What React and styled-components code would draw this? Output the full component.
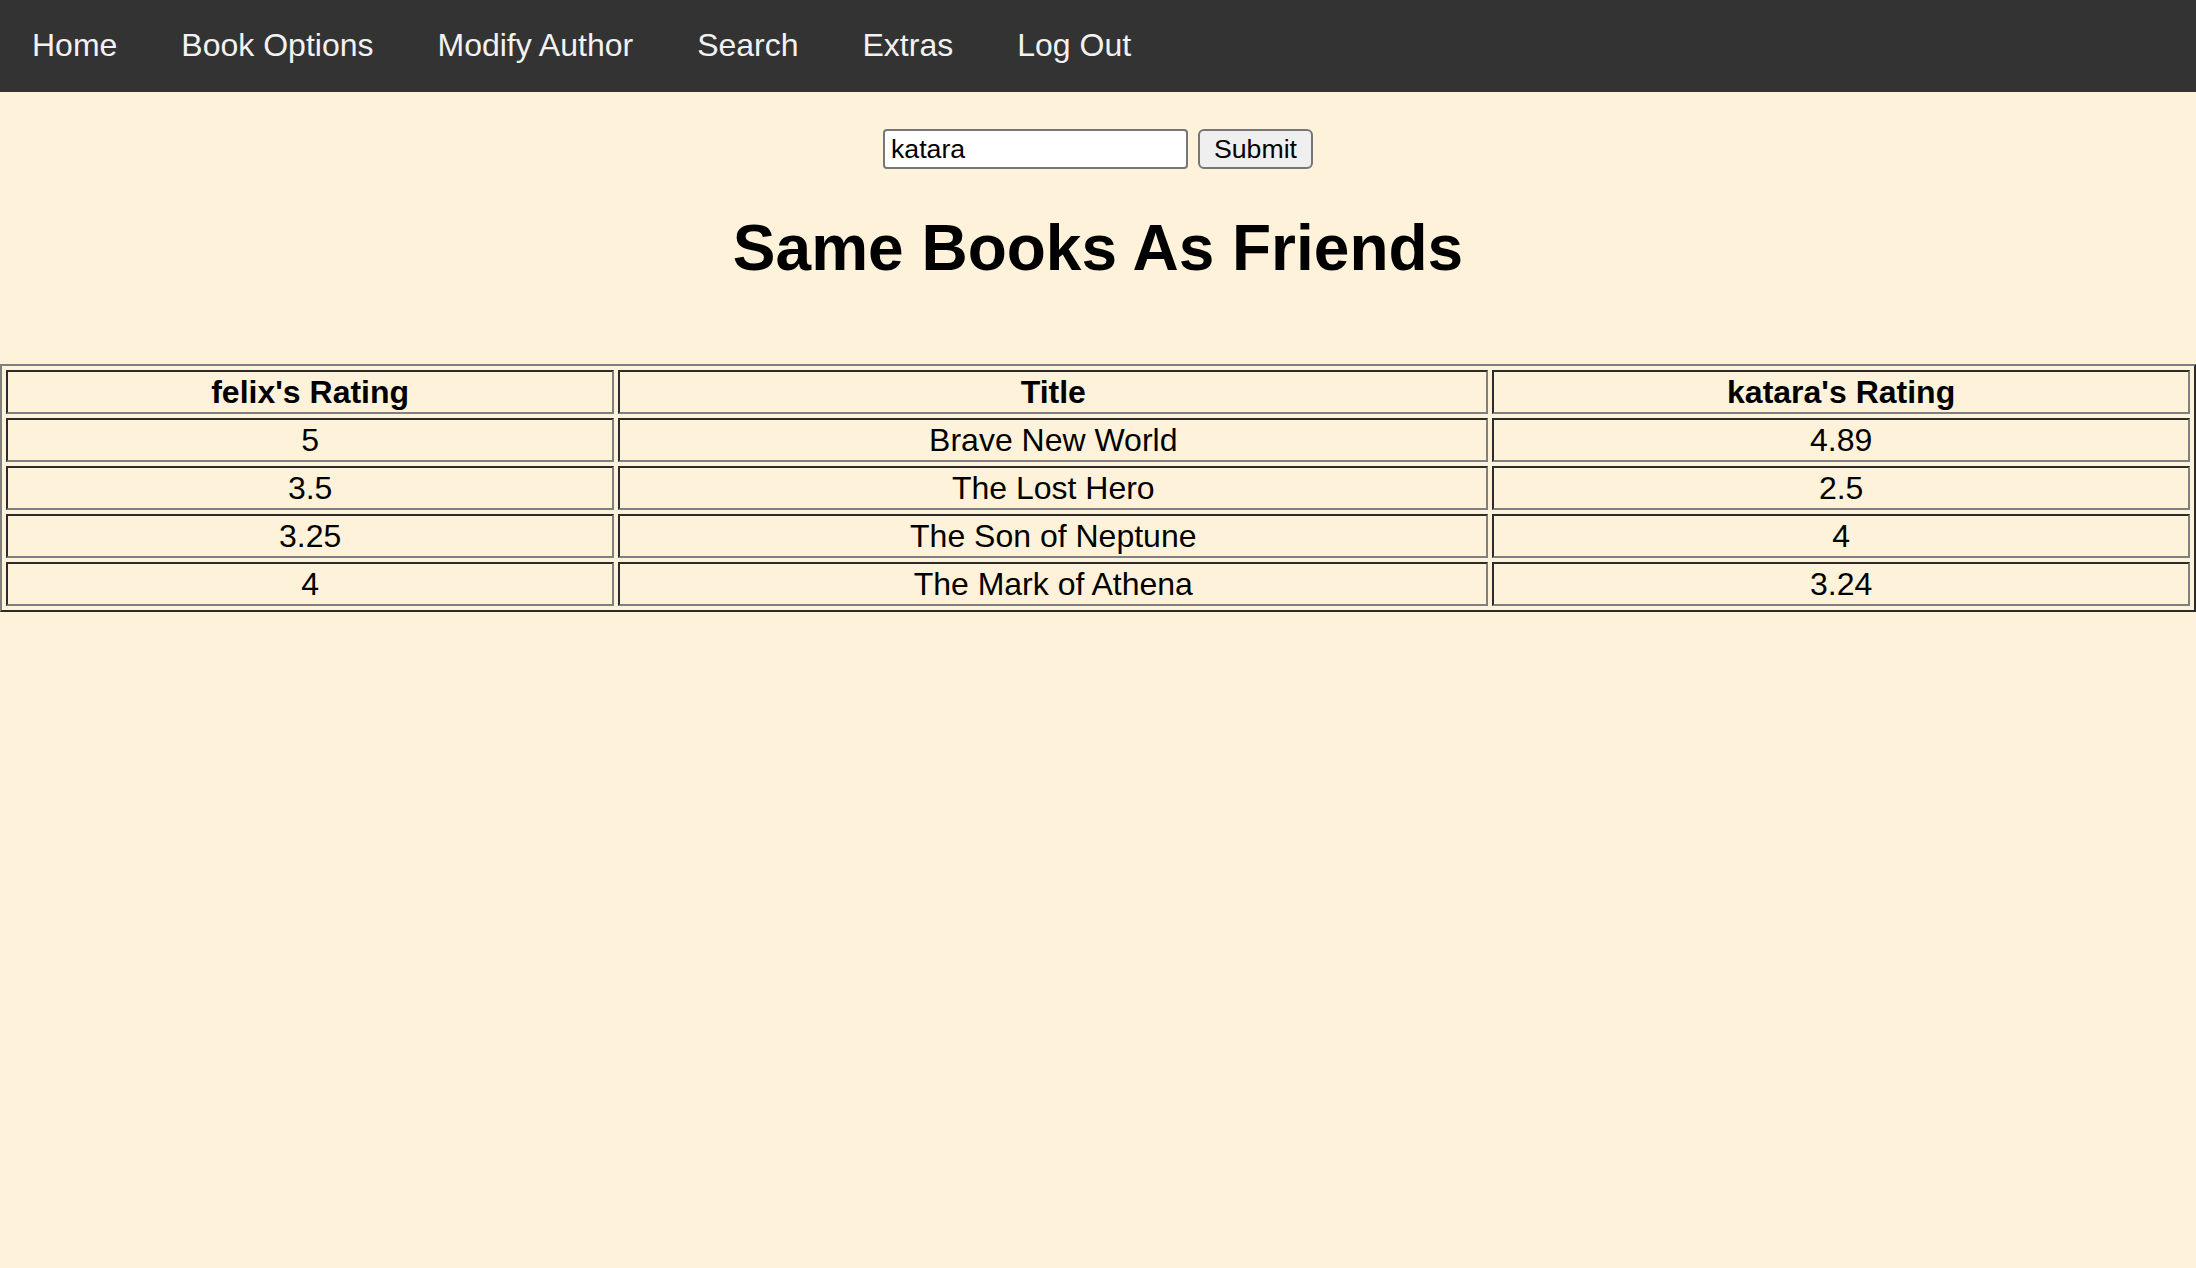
import styled, { createGlobalStyle } from 'styled-components';

const GlobalStyle = createGlobalStyle`
  body {
    margin: 0;
    background-color: #fef3da;
    font-family: 'Liberation Sans', Arial, Helvetica, sans-serif;
    font-size: 32px;
    color: #000;
  }
`;

const Nav = styled.nav`
  display: flex;
  background-color: #333;
`;

const NavLink = styled.a`
  display: block;
  padding: 27px 32px 29px;
  color: #f2f2f2;
  font-size: 32px;
  line-height: 36px;
  text-decoration: none;
`;

const Form = styled.form`
  display: flex;
  justify-content: center;
  gap: 10px;
  margin-top: 37px;
`;

const Input = styled.input`
  box-sizing: border-box;
  width: 305px;
  height: 40px;
  padding: 2px 6px;
  border: 2px solid #767676;
  border-radius: 4px;
  background: #fff;
  font-family: 'Liberation Sans', Arial, sans-serif;
  font-size: 26.67px;
`;

const Button = styled.button`
  box-sizing: border-box;
  height: 40px;
  padding: 0 14px;
  border: 2px solid #767676;
  border-radius: 6px;
  background: #efefef;
  color: #000;
  font-family: 'Liberation Sans', Arial, sans-serif;
  font-size: 26.67px;
`;

const Title = styled.h1`
  margin: 42px 0 79px;
  font-size: 64px;
  font-weight: bold;
  text-align: center;
`;

const Table = styled.table`
  width: 100%;
  border-collapse: separate;
  border-spacing: 4px;
  border: 2px solid;
  border-color: #808080 #2b2b2b #2b2b2b #808080;
`;

const Cell = styled.td`
  padding: 2px;
  border: 2px solid;
  border-color: #2b2b2b #808080 #808080 #2b2b2b;
  font-size: 32px;
  line-height: 36px;
  font-weight: ${(props) => (props.$head ? 'bold' : 'normal')};
  text-align: center;
`;

const links = ['Home', 'Book Options', 'Modify Author', 'Search', 'Extras', 'Log Out'];

const rows = [
  ['5', 'Brave New World', '4.89'],
  ['3.5', 'The Lost Hero', '2.5'],
  ['3.25', 'The Son of Neptune', '4'],
  ['4', 'The Mark of Athena', '3.24'],
];

const App = () => {
  return (
    <>
      <GlobalStyle />
      <Nav>
        {links.map((link) => (
          <NavLink key={link} href="#">
            {link}
          </NavLink>
        ))}
      </Nav>
      <Form onSubmit={(e) => e.preventDefault()}>
        <Input type="text" defaultValue="katara" />
        <Button type="submit">Submit</Button>
      </Form>
      <Title>Same Books As Friends</Title>
      <Table>
        <thead>
          <tr>
            <Cell as="th" $head>felix's Rating</Cell>
            <Cell as="th" $head>Title</Cell>
            <Cell as="th" $head>katara's Rating</Cell>
          </tr>
        </thead>
        <tbody>
          {rows.map((row, index) => (
            <tr key={index}>
              {row.map((value, i) => (
                <Cell key={i}>{value}</Cell>
              ))}
            </tr>
          ))}
        </tbody>
      </Table>
    </>
  );
};

export default App;
